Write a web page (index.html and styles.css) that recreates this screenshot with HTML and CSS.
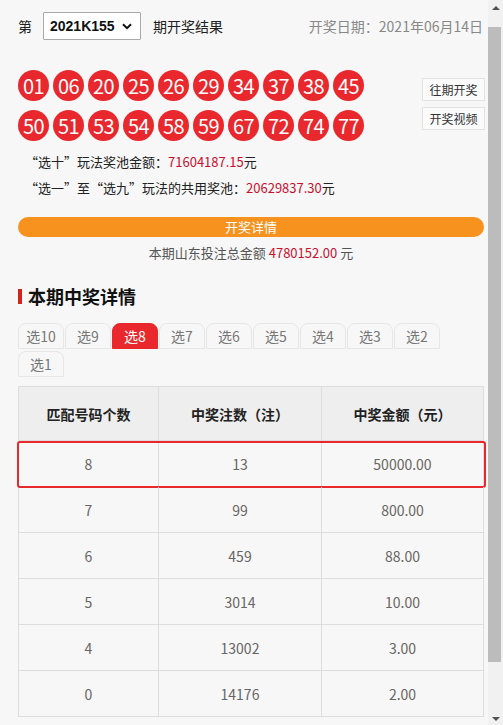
FILE: index.html
```html
<!DOCTYPE html>
<html lang="zh-CN">
<head>
<meta charset="utf-8">
<title>期开奖结果</title>
<link rel="stylesheet" href="styles.css">
</head>
<body>
<div class="page">
  <main class="main">
    <div class="topbar">
      <div class="issue">
        <span class="di">第</span>
        <div class="select-wrap">
          <select class="select"><option>2021K155</option></select>
          <svg class="chev" width="10" height="7" viewBox="0 0 10 7"><path d="M1 1.2 L5 5.2 L9 1.2" fill="none" stroke="#111" stroke-width="2"/></svg>
        </div>
        <span class="qi">期开奖结果</span>
      </div>
      <div class="date">开奖日期<span class="colon">：</span>2021年06月14日</div>
    </div>

    <div class="result">
      <div class="balls">
        <span class="ball">01</span><span class="ball">06</span><span class="ball">20</span><span class="ball">25</span><span class="ball">26</span><span class="ball">29</span><span class="ball">34</span><span class="ball">37</span><span class="ball">38</span><span class="ball">45</span>
        <span class="ball">50</span><span class="ball">51</span><span class="ball">53</span><span class="ball">54</span><span class="ball">58</span><span class="ball">59</span><span class="ball">67</span><span class="ball">72</span><span class="ball">74</span><span class="ball">77</span>
      </div>
      <div class="links">
        <a class="btn">往期开奖</a>
        <a class="btn">开奖视频</a>
      </div>
    </div>

    <p class="pool">“选十”玩法奖池金额<span class="colon">：</span><span class="red">71604187.15</span>元</p>
    <p class="pool">“选一”至“选九”玩法的共用奖池<span class="colon">：</span><span class="red">20629837.30</span>元</p>

    <div class="detail-bar">开奖详情</div>
    <p class="total">本期山东投注总金额 <span class="red">4780152.00</span> 元</p>

    <h2 class="heading">本期中奖详情</h2>

    <div class="tabs">
      <span class="tab">选10</span><span class="tab">选9</span><span class="tab active">选8</span><span class="tab">选7</span><span class="tab">选6</span><span class="tab">选5</span><span class="tab">选4</span><span class="tab">选3</span><span class="tab">选2</span><span class="tab">选1</span>
    </div>

    <div class="table">
      <div class="row head"><div class="cell">匹配号码个数</div><div class="cell">中奖注数<span class="paren">（注）</span></div><div class="cell">中奖金额<span class="paren">（元）</span></div></div>
      <div class="row hl"><div class="cell">8</div><div class="cell">13</div><div class="cell">50000.00</div></div>
      <div class="row"><div class="cell">7</div><div class="cell">99</div><div class="cell">800.00</div></div>
      <div class="row"><div class="cell">6</div><div class="cell">459</div><div class="cell">88.00</div></div>
      <div class="row"><div class="cell">5</div><div class="cell">3014</div><div class="cell">10.00</div></div>
      <div class="row"><div class="cell">4</div><div class="cell">13002</div><div class="cell">3.00</div></div>
      <div class="row"><div class="cell">0</div><div class="cell">14176</div><div class="cell">2.00</div></div>
    </div>
  </main>
  <aside class="scrollbar">
    <span class="arrow up"></span>
    <span class="thumb"></span>
    <span class="arrow down"></span>
  </aside>
</div>
</body>
</html>
```

FILE: styles.css
```css
* { box-sizing: border-box; }
html, body { margin: 0; padding: 0; }
body {
  background: #f7f7f7;
  font-family: "Noto Sans CJK SC", "Noto Sans", sans-serif;
  color: #333;
  font-size: 14px;
  overflow: hidden;
}
.page {
  display: flex;
  height: 725px;
  overflow: hidden;
}
.main {
  flex: 1;
  padding: 12px 4px 0 18px;
  min-width: 0;
}
.colon { font-family: "Noto Sans CJK TC", "Noto Sans CJK SC", sans-serif; }

/* top bar */
.topbar {
  display: flex;
  justify-content: space-between;
  align-items: center;
  height: 28px;
}
.issue { display: flex; align-items: center; }
.di { width: 25px; color: #222; }
.select-wrap { position: relative; width: 98px; height: 28px; }
.select {
  appearance: none;
  -webkit-appearance: none;
  width: 98px;
  height: 28px;
  border: 1px solid #a9a9a9;
  border-radius: 1px;
  background: #fff;
  font-family: "Liberation Sans", Arial, sans-serif;
  font-weight: bold;
  font-size: 14px;
  color: #111;
  padding: 0 0 0 6px;
  margin: 0;
}
.chev { position: absolute; right: 9px; top: 11px; pointer-events: none; }
.qi { margin-left: 12px; color: #222; }
.date { color: #888; font-size: 14px; margin-right: 1px; }

/* balls */
.result {
  display: flex;
  justify-content: space-between;
  margin-top: 30px;
}
.balls {
  display: grid;
  grid-template-columns: repeat(10, 31px);
  column-gap: 4px;
  row-gap: 9px;
}
.ball {
  width: 31px;
  height: 31px;
  border-radius: 50%;
  background: #e9282e;
  color: #fff;
  font-size: 20px;
  line-height: 31px;
  text-align: center;
  letter-spacing: -0.5px;
}
.links {
  display: flex;
  flex-direction: column;
  gap: 6px;
  margin-top: 8px;
  margin-right: -1px;
}
.btn {
  display: block;
  width: 63px;
  height: 23px;
  line-height: 21px;
  border: 1px solid #e2e2e2;
  background: #fbfbfb;
  font-size: 12px;
  color: #333;
  text-align: center;
}

.pool {
  margin: 0;
  padding-left: 7px;
  font-size: 13px;
  line-height: 26px;
  color: #222;
}
.pool:first-of-type { margin-top: 8px; }
.red { color: #c8102e; }

.detail-bar {
  margin-top: 16px;
  height: 20px;
  line-height: 20px;
  border-radius: 10px;
  background: #f7921e;
  color: #fff;
  font-size: 13px;
  text-align: center;
}
.total {
  margin: 6px 0 0;
  line-height: 20px;
  font-size: 13px;
  color: #555;
  text-align: center;
}

.heading {
  margin: 21px 0 0;
  display: flex;
  align-items: center;
  gap: 6px;
  font-size: 18px;
  line-height: 24px;
  font-weight: bold;
  color: #111;
}
.heading::before {
  content: "";
  width: 4px;
  height: 15px;
  background: #d1241b;
}

/* tabs */
.tabs {
  display: flex;
  flex-wrap: wrap;
  column-gap: 1px;
  row-gap: 2px;
  margin-top: 15px;
}
.tab {
  width: 46px;
  height: 26px;
  line-height: 25px;
  border: 1px solid #e6e6e6;
  border-radius: 8px 8px 0 0;
  background: #f7f7f7;
  color: #777;
  font-size: 14px;
  text-align: center;
}
.tab.active {
  background: #e9282e;
  border-color: #e9282e;
  color: #fff;
}

/* table */
.table {
  margin-top: 9px;
  width: 466px;
  border-left: 1px solid #dddddd;
  border-top: 1px solid #dddddd;
}
.row {
  display: grid;
  grid-template-columns: 140px 163px 1fr;
  height: 46px;
  position: relative;
}
.row.head { height: 54px; background: #eeeeee; }
.cell {
  border-right: 1px solid #dddddd;
  border-bottom: 1px solid #dddddd;
  display: flex;
  align-items: center;
  justify-content: center;
  font-size: 14px;
  color: #666;
}
.head .cell { font-weight: bold; color: #222; }
.paren { font-family: "Noto Sans CJK TC", "Noto Sans CJK SC", sans-serif; }
.row.hl::after {
  content: "";
  position: absolute;
  left: -2px;
  right: -2px;
  top: 0;
  bottom: -1px;
  border: 2px solid #e9282e;
  border-radius: 3px;
}

/* fake scrollbar */
.scrollbar {
  width: 15px;
  flex: none;
  background: #f1f1f1;
  position: relative;
}
.thumb {
  position: absolute;
  left: 0;
  right: 2px;
  top: 27px;
  height: 635px;
  background: #bcbcbc;
}
.arrow {
  position: absolute;
  left: 4px;
  width: 0;
  height: 0;
  border-left: 4px solid transparent;
  border-right: 4px solid transparent;
}
.arrow.up { top: 6px; border-bottom: 4px solid #505050; }
.arrow.down { bottom: 4px; border-top: 4px solid #505050; }
```
